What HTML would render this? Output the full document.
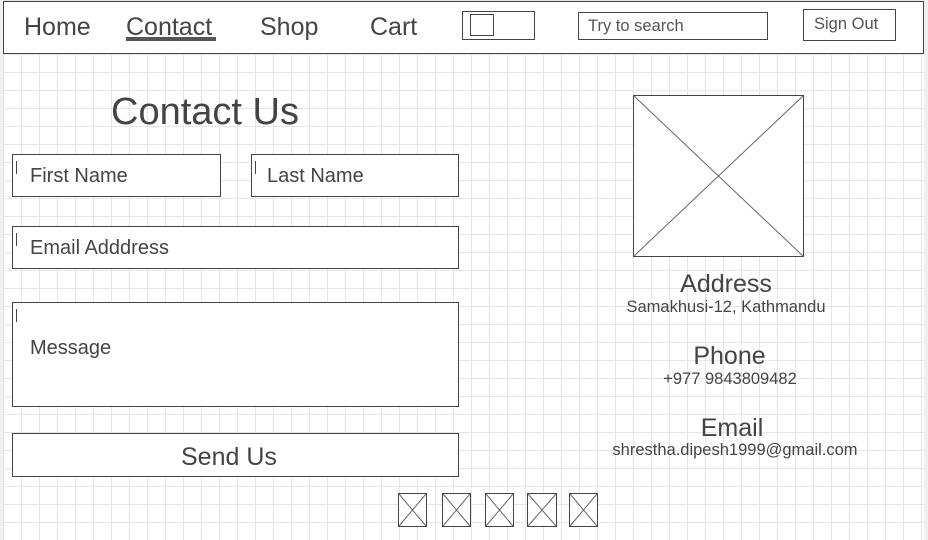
<!DOCTYPE html>
<html><head><style>
body{margin:0;width:928px;height:540px;overflow:hidden;font-family:"Liberation Sans",sans-serif;color:#444;
background:#f0f0f0;position:relative}
.pg{position:absolute;left:3px;top:0;width:921px;height:540px;background-color:#fff;
background-image:linear-gradient(#e6e6e6 1px,transparent 1px),linear-gradient(90deg,#e6e6e6 1px,transparent 1px);
background-size:18px 18px;background-position:0 0;}
.a{position:absolute}
.b{position:absolute;border:1px solid #444;background:#fff;box-sizing:border-box}
.t{position:absolute;white-space:nowrap}
</style></head><body>
<div class="pg"></div>
<div class="b" style="left:3px;top:1px;width:921px;height:53px"></div>
<div class="t" style="left:24px;top:13px;font-size:25px">Home</div>
<div class="t" style="left:126px;top:13px;font-size:25px">Contact</div>
<div class="a" style="left:126px;top:37px;width:90px;height:4px;background:#555"></div>
<div class="t" style="left:260px;top:13px;font-size:25px">Shop</div>
<div class="t" style="left:370px;top:13px;font-size:25px">Cart</div>
<div class="b" style="left:462px;top:11px;width:73px;height:29px"></div>
<div class="b" style="left:470px;top:14px;width:24px;height:22px"></div>
<div class="b" style="left:578px;top:12px;width:190px;height:28px"></div>
<div class="t" style="left:588px;top:17px;font-size:16.5px;color:#555">Try to search</div>
<div class="b" style="left:803px;top:9px;width:93px;height:32px"></div>
<div class="t" style="left:814px;top:15px;font-size:16.5px;color:#555">Sign Out</div>

<div class="t" style="left:111px;top:91px;font-size:38px">Contact Us</div>
<div class="b" style="left:12px;top:154px;width:209px;height:43px"></div>
<div class="t" style="left:30px;top:165px;font-size:20px">First Name</div>
<div class="b" style="left:251px;top:154px;width:208px;height:43px"></div>
<div class="t" style="left:267px;top:165px;font-size:20px">Last Name</div>
<div class="b" style="left:12px;top:226px;width:447px;height:43px"></div>
<div class="t" style="left:30px;top:237px;font-size:20px">Email Adddress</div>
<div class="b" style="left:12px;top:302px;width:447px;height:105px"></div>
<div class="t" style="left:30px;top:337px;font-size:20px">Message</div>
<div class="b" style="left:12px;top:433px;width:447px;height:44px"></div>
<div class="t" style="left:181px;top:443px;font-size:25px">Send Us</div>
<div class="a" style="left:16px;top:161px;width:1px;height:13px;background:#444"></div>
<div class="a" style="left:255px;top:161px;width:1px;height:13px;background:#444"></div>
<div class="a" style="left:16px;top:233px;width:1px;height:13px;background:#444"></div>
<div class="a" style="left:16px;top:309px;width:1px;height:13px;background:#444"></div>

<svg class="a" style="left:0;top:0" width="928" height="540">
<g fill="#fff" stroke="#444" stroke-width="1">
<rect x="633.5" y="95.5" width="170" height="161"/>
<rect x="398.5" y="493.5" width="28" height="33"/>
<rect x="442.5" y="493.5" width="28" height="33"/>
<rect x="485.5" y="493.5" width="28" height="33"/>
<rect x="527.5" y="493.5" width="29" height="33"/>
<rect x="569.5" y="493.5" width="28" height="33"/>
</g>
<g stroke="#666" stroke-width="1">
<path d="M634 96L803 256M803 96L634 256"/>
<path d="M399 494L426 526M426 494L399 526"/>
<path d="M443 494L470 526M470 494L443 526"/>
<path d="M486 494L513 526M513 494L486 526"/>
<path d="M528 494L556 526M556 494L528 526"/>
<path d="M570 494L597 526M597 494L570 526"/>
</g></svg>

<div class="t" style="left:0;width:1452px;text-align:center;top:270px;font-size:25px">Address</div>
<div class="t" style="left:0;width:1452px;text-align:center;top:298px;font-size:16.5px">Samakhusi-12, Kathmandu</div>
<div class="t" style="left:0;width:1459px;text-align:center;top:342px;font-size:25px">Phone</div>
<div class="t" style="left:0;width:1460px;text-align:center;top:370px;font-size:16.5px">+977 9843809482</div>
<div class="t" style="left:0;width:1464px;text-align:center;top:414px;font-size:25px">Email</div>
<div class="t" style="left:0;width:1470px;text-align:center;top:441px;font-size:16.5px">shrestha.dipesh1999@gmail.com</div>
</body></html>
